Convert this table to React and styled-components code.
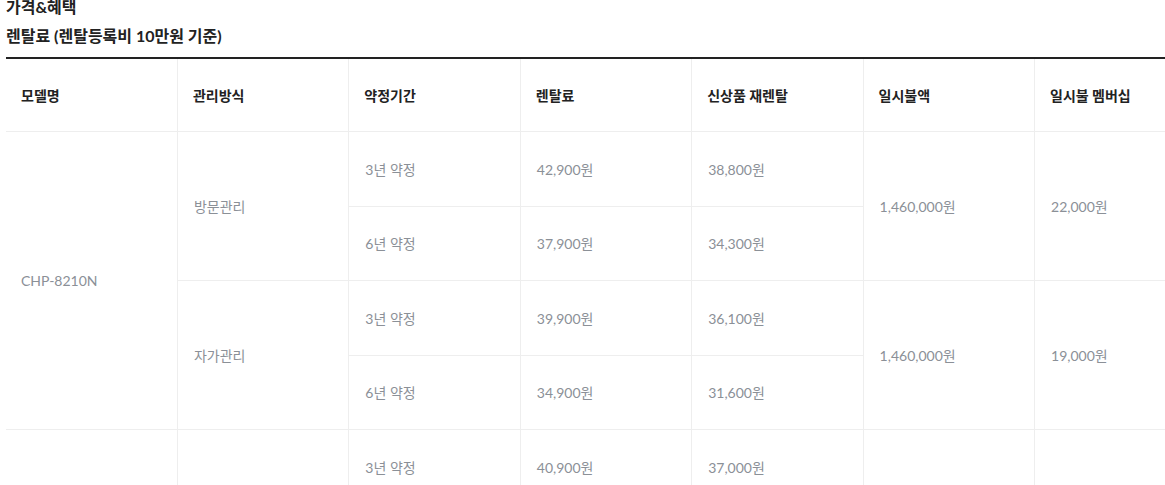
import styled, { createGlobalStyle } from 'styled-components';

const GlobalStyle = createGlobalStyle`
  body {
    margin: 0;
    background: #fff;
    overflow: hidden;
    font-family: Lato, "Noto Sans CJK KR", sans-serif;
  }
`;

const Section = styled.section`
  margin-top: -5px;
  padding-left: 6px;
`;

const Heading = styled.h3`
  margin: 0;
  font-size: 16px;
  line-height: 23px;
  font-weight: 700;
  color: #222;
`;

const SubHeading = styled(Heading)`
  margin-top: 6px;
`;

const Table = styled.table`
  margin-top: 10px;
  width: 1200px;
  table-layout: fixed;
  border-collapse: collapse;
  border-top: 2px solid #222;
`;

const Th = styled.th`
  height: 72px;
  padding: 0 0 0 15px;
  text-align: left;
  font-size: 14px;
  font-weight: 700;
  color: #222;
  border-bottom: 1px solid #eee;
  border-left: 1px solid #eee;
  &:first-child {
    border-left: none;
  }
`;

const Td = styled.td`
  height: 73.5px;
  padding: 0 0 0 16px;
  font-size: 14px;
  color: #8b9097;
  vertical-align: middle;
  border-bottom: 1px solid #eee;
  border-left: ${p => (p.$first ? 'none' : '1px solid #eee')};
  padding-left: ${p => (p.$first ? '15px' : '16px')};
`;

const columns = ['모델명', '관리방식', '약정기간', '렌탈료', '신상품 재렌탈', '일시불액', '일시불 멤버십'];

const models = [
  {
    name: 'CHP-8210N',
    plans: [
      {
        type: '방문관리',
        lump: '1,460,000원',
        member: '22,000원',
        terms: [
          { period: '3년 약정', fee: '42,900원', re: '38,800원' },
          { period: '6년 약정', fee: '37,900원', re: '34,300원' },
        ],
      },
      {
        type: '자가관리',
        lump: '1,460,000원',
        member: '19,000원',
        terms: [
          { period: '3년 약정', fee: '39,900원', re: '36,100원' },
          { period: '6년 약정', fee: '34,900원', re: '31,600원' },
        ],
      },
    ],
  },
  {
    name: 'CHP-8210N',
    plans: [
      {
        type: '방문관리',
        lump: '1,490,000원',
        member: '22,000원',
        terms: [
          { period: '3년 약정', fee: '40,900원', re: '37,000원' },
          { period: '6년 약정', fee: '35,900원', re: '32,500원' },
        ],
      },
    ],
  },
];

export default function App() {
  return (
    <>
      <GlobalStyle />
      <Section>
        <Heading>가격&혜택</Heading>
        <SubHeading>렌탈료 (렌탈등록비 10만원 기준)</SubHeading>
        <Table>
          <thead>
            <tr>
              {columns.map(c => (
                <Th key={c}>{c}</Th>
              ))}
            </tr>
          </thead>
          <tbody>
            {models.map((m, mi) => {
              const total = m.plans.reduce((n, p) => n + p.terms.length, 0);
              return m.plans.map((p, pi) =>
                p.terms.map((t, ti) => (
                  <tr key={`${mi}-${pi}-${ti}`}>
                    {pi === 0 && ti === 0 && (
                      <Td $first rowSpan={total}>{m.name}</Td>
                    )}
                    {ti === 0 && <Td rowSpan={p.terms.length}>{p.type}</Td>}
                    <Td>{t.period}</Td>
                    <Td>{t.fee}</Td>
                    <Td>{t.re}</Td>
                    {ti === 0 && <Td rowSpan={p.terms.length}>{p.lump}</Td>}
                    {ti === 0 && <Td rowSpan={p.terms.length}>{p.member}</Td>}
                  </tr>
                ))
              );
            })}
          </tbody>
        </Table>
      </Section>
    </>
  );
}
